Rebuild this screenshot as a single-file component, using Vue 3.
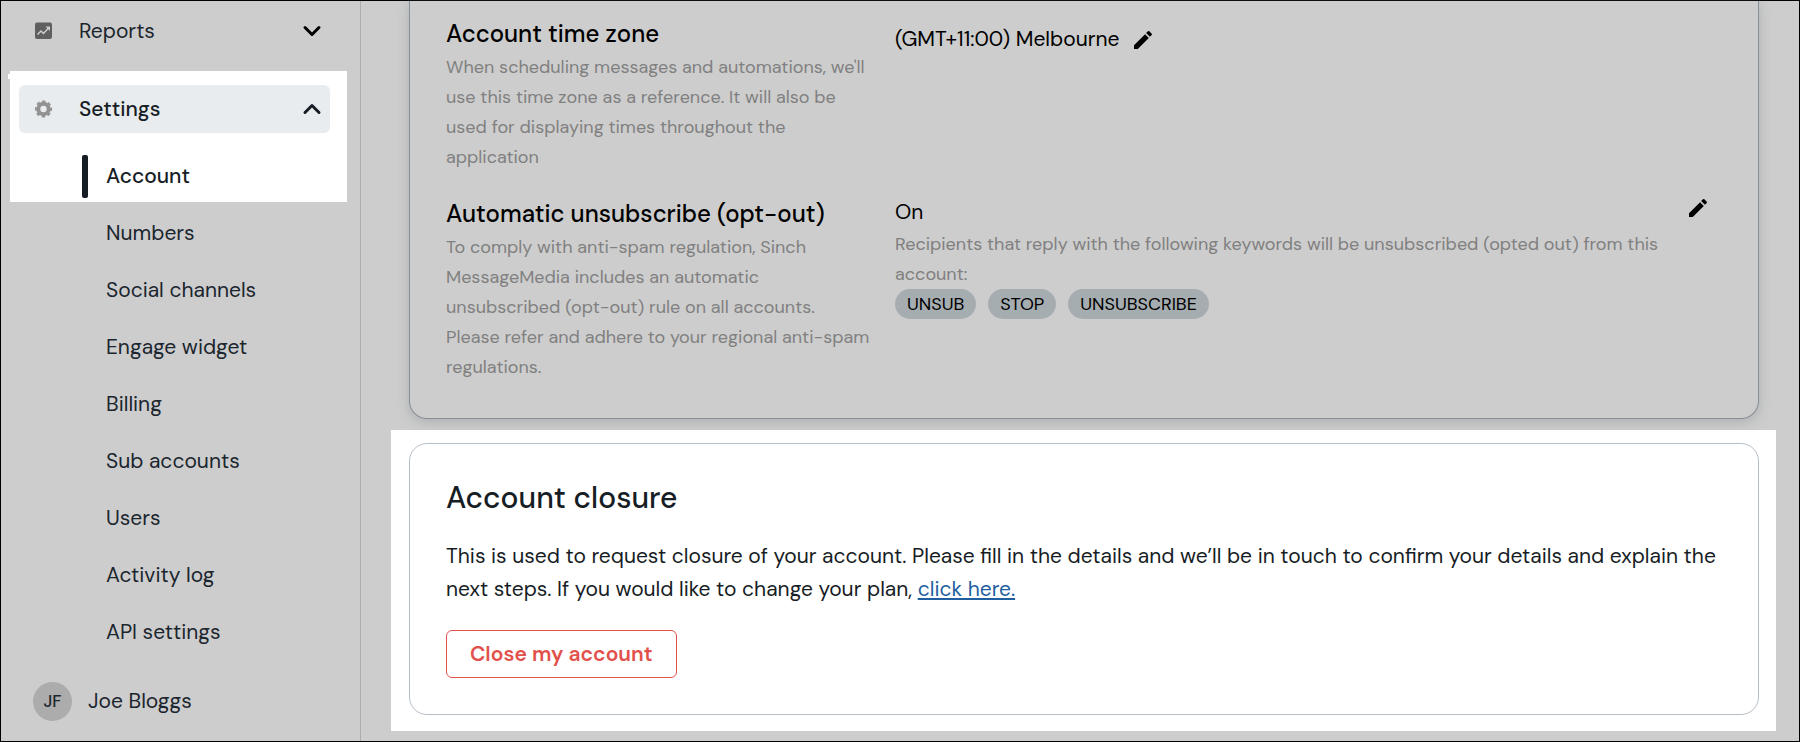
<script setup>
/**
 * AccountSettings: settings page with the side navigation, the account
 * preferences card and the account closure card.
 */
import { ref } from 'vue';

// ─── Navigation ─────────────────────────────────────────────────────
const settingsOpen = ref(true);

const settingsLinks = [
  'Numbers',
  'Social channels',
  'Engage widget',
  'Billing',
  'Sub accounts',
  'Users',
  'Activity log',
  'API settings',
];

// ─── Opt-out keywords ───────────────────────────────────────────────
const keywords = ['UNSUB', 'STOP', 'UNSUBSCRIBE'];
</script>

<template>
  <div class="page">
    <aside class="sidebar">
      <nav class="nav">
        <button type="button" class="nav-group">
          <svg class="nav-icon" viewBox="0 0 18 18" aria-hidden="true">
            <rect x="0" y="0.5" width="17" height="16.5" rx="2" fill="#5f5f5f" />
            <path d="M2.5 12.5 L6 9 L8.5 11.5 L13.5 6" fill="none" stroke="#cdcdcd" stroke-width="1.5" />
            <path d="M10.5 4.5 H15 V9 Z" fill="#cdcdcd" />
          </svg>
          <span class="nav-label">Reports</span>
          <svg class="chevron" viewBox="0 0 20 20" aria-hidden="true">
            <path d="M3 6.5 L10 13.5 L17 6.5" />
          </svg>
        </button>

        <div class="spotlight nav-spotlight">
          <button
            type="button"
            class="nav-group active"
            :aria-expanded="settingsOpen"
            @click="settingsOpen = !settingsOpen"
          >
            <svg class="nav-icon" viewBox="0 0 18 18" aria-hidden="true">
              <circle cx="8.5" cy="9" r="5.2" fill="none" stroke="#929292" stroke-width="4" />
              <circle cx="8.5" cy="9" r="7.6" fill="none" stroke="#929292" stroke-width="2" stroke-dasharray="3.4 2.57" stroke-dashoffset="1.7" />
            </svg>
            <span class="nav-label">Settings</span>
            <svg class="chevron" viewBox="0 0 20 20" aria-hidden="true">
              <path d="M3 13.5 L10 6.5 L17 13.5" />
            </svg>
          </button>
          <a v-show="settingsOpen" href="#account" class="nav-current">Account</a>
        </div>

        <ul v-show="settingsOpen" class="nav-list">
          <li v-for="link in settingsLinks" :key="link">
            <a href="#" class="nav-link">{{ link }}</a>
          </li>
        </ul>
      </nav>

      <div class="user">
        <span class="avatar">JF</span>
        <span>Joe Bloggs</span>
      </div>
    </aside>

    <main class="main">
      <section class="card preferences">
        <div class="setting">
          <div class="setting-info">
            <h3 class="setting-title">Account time zone</h3>
            <p class="hint">
              When scheduling messages and automations, we'll use this time zone as a reference.
              It will also be used for displaying times throughout the application
            </p>
          </div>
          <div class="timezone">
            <span>(GMT+11:00) Melbourne</span>
            <button type="button" class="edit" aria-label="Edit time zone">
              <svg viewBox="0 0 24 24" aria-hidden="true">
                <path d="M3 17.25V21h3.75L17.81 9.94l-3.75-3.75L3 17.25zM20.71 7.04a1 1 0 0 0 0-1.41l-2.34-2.34a1 1 0 0 0-1.41 0l-1.83 1.83 3.75 3.75 1.83-1.83z" />
              </svg>
            </button>
          </div>
        </div>

        <div class="setting">
          <div class="setting-info">
            <h3 class="setting-title">Automatic unsubscribe (opt-out)</h3>
            <p class="hint">
              To comply with anti-spam regulation, Sinch MessageMedia includes an automatic
              unsubscribed (opt-out) rule on all accounts. Please refer and adhere to your
              regional anti-spam regulations.
            </p>
          </div>
          <div class="optout">
            <div class="optout-body">
              <p>On</p>
              <p class="hint">
                Recipients that reply with the following keywords will be unsubscribed (opted out)
                from this account:
              </p>
              <div class="tags">
                <span v-for="word in keywords" :key="word" class="tag">{{ word }}</span>
              </div>
            </div>
            <button type="button" class="edit" aria-label="Edit automatic unsubscribe">
              <svg viewBox="0 0 24 24" aria-hidden="true">
                <path d="M3 17.25V21h3.75L17.81 9.94l-3.75-3.75L3 17.25zM20.71 7.04a1 1 0 0 0 0-1.41l-2.34-2.34a1 1 0 0 0-1.41 0l-1.83 1.83 3.75 3.75 1.83-1.83z" />
              </svg>
            </button>
          </div>
        </div>
      </section>

      <div class="spotlight main-spotlight">
        <section class="card closure">
          <h2 class="closure-title">Account closure</h2>
          <p>
            This is used to request closure of your account. Please fill in the details and we’ll be
            in touch to confirm your details and explain the next steps. If you would like to change
            your plan, <a href="#" class="text-link">click here.</a>
          </p>
          <button type="button" class="danger">Close my account</button>
        </section>
      </div>
    </main>
  </div>
</template>

<style>
body {
  margin: 0;
  background: #cdcdcd;
}
</style>

<style scoped>
* {
  box-sizing: border-box;
}
h2,
h3,
p,
ul {
  margin: 0;
  padding: 0;
}
button {
  font: inherit;
  color: inherit;
  background: none;
  border: 0;
  padding: 0;
  cursor: pointer;
}
.page {
  display: flex;
  min-height: 100vh;
  border: 1px solid #000;
  background: #cdcdcd;
  color: #1b252d;
  font-family: "DM Sans", Roboto, "Liberation Sans", sans-serif;
  font-size: 21px;
  line-height: 33px;
}
.spotlight {
  background: #fff;
}

/* Sidebar */
.sidebar {
  display: flex;
  flex-direction: column;
  flex: none;
  width: 360px;
  border-right: 1px solid #a9afb1;
}
.nav {
  padding-top: 6px;
}
.nav-group {
  display: flex;
  align-items: center;
  width: 311px;
  height: 48px;
  margin-left: 18px;
  padding: 0 8px 0 16px;
  border-radius: 6px;
  text-align: left;
}
.nav-group.active {
  margin-left: 9px;
  background: #e8ecef;
  color: #171d25;
  font-weight: 500;
}
.nav-icon {
  width: 18px;
  height: 18px;
  margin-right: 26px;
}
.nav-label {
  flex: 1;
}
.chevron {
  width: 20px;
  height: 20px;
  fill: none;
  stroke: #000;
  stroke-width: 3;
  stroke-linecap: round;
  stroke-linejoin: round;
}
.active .chevron {
  stroke: #171d25;
}
.nav-spotlight {
  position: relative;
  width: 337px;
  margin: 16px 0 0 9px;
  padding: 14px 0 4px;
}
.nav-spotlight::before {
  content: "";
  position: absolute;
  top: 3px;
  left: -2px;
  width: 2px;
  height: 5px;
  background: #fff;
}
.nav-current {
  position: relative;
  display: block;
  margin: 22px 0 0 72px;
  padding: 5px 0 5px 24px;
  color: #171d25;
  font-weight: 500;
  text-decoration: none;
}
.nav-current::before {
  content: "";
  position: absolute;
  inset: 0 auto 0 0;
  width: 6px;
  border-radius: 2px;
  background: #171d25;
}
.nav-list {
  margin-top: 3px;
  list-style: none;
}
.nav-link {
  display: block;
  padding: 12px 0 12px 105px;
  color: inherit;
  text-decoration: none;
}
.user {
  display: flex;
  flex: 1;
  align-items: center;
  gap: 16px;
  padding-left: 32px;
}
.avatar {
  width: 39px;
  border-radius: 50%;
  background: #acacac;
  font-size: 17px;
  font-weight: 500;
  line-height: 39px;
  text-align: center;
}

/* Main column */
.main {
  flex: 1;
  min-width: 0;
}
.card {
  border: 1px solid #b6bec6;
  border-radius: 18px;
  padding: 36px;
}
.preferences {
  display: grid;
  gap: 24px;
  margin: 0 40px 0 48px;
  padding-top: 15px;
  border-color: #888f98;
  border-top: 0;
  border-radius: 0 0 18px 18px;
  box-shadow: 0 3px 12px rgba(120, 130, 140, 0.4);
  color: #000;
}
.setting {
  display: grid;
  grid-template-columns: 449px 1fr;
}
.setting-info {
  padding-right: 24px;
}
.setting-title {
  font-size: 24px;
  font-weight: 500;
  line-height: 36px;
}
.hint {
  color: #808080;
  font-size: 18px;
  line-height: 30px;
}
.timezone {
  display: flex;
  align-items: center;
  align-self: start;
  gap: 12px;
  padding-top: 7px;
}
.edit {
  flex: none;
  width: 24px;
  height: 24px;
}
.edit svg {
  display: block;
}
.optout {
  display: flex;
  align-items: flex-start;
  padding-right: 12px;
}
.optout-body {
  flex: 1;
}
.tags {
  display: flex;
  gap: 12px;
}
.tag {
  padding: 0 12px;
  border-radius: 15px;
  background: #a6adb0;
  font-size: 18px;
  line-height: 30px;
}
.main-spotlight {
  margin: 11px 23px 10px 30px;
  padding: 13px 17px 16px 18px;
}
.closure {
  color: #171d25;
}
.closure-title {
  margin-bottom: 24px;
  font-size: 30px;
  font-weight: 500;
  line-height: 36px;
}
.text-link {
  color: #1f5f9f;
}
.danger {
  display: block;
  height: 48px;
  margin-top: 24px;
  padding: 0 23px;
  border: 1px solid #e2504c;
  border-radius: 6px;
  color: #e2504c;
  font-weight: 600;
}
</style>
